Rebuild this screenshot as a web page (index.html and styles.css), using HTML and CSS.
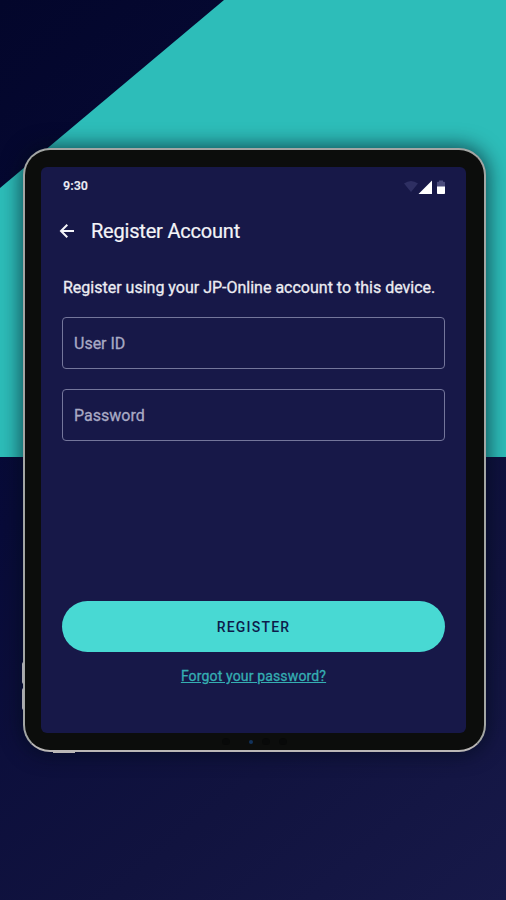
FILE: index.html
```
<!DOCTYPE html>
<html lang="en">
<head>
    <meta charset="UTF-8">
    <meta name="viewport" content="width=device-width, initial-scale=1.0">
    <title>Register Account</title>
    <link rel="stylesheet" href="styles.css">
</head>
<body>
    <div class="backdrop"></div>

    <div class="device">
        <span class="side-button volume-up"></span>
        <span class="side-button volume-down"></span>
        <span class="antenna"></span>

        <div class="screen">
            <div class="status-bar">
                <span class="time">9:30</span>
                <svg class="status-icons" width="42" height="16" viewBox="0 0 42 16">
                    <path d="M0 3.5 Q7 -1.5 14 3.5 L7 12 Z" fill="#2e2f62"/>
                    <path d="M28 0.5 V14 H14.5 Z" fill="#fff"/>
                    <path d="M33 7 V2.5 Q33 1.8 33.7 1.8 H35 V0.5 H39 V1.8 H40.3 Q41 1.8 41 2.5 V7 Z" fill="#4b4c7c"/>
                    <path d="M33 6.5 H41 V13.2 Q41 14 40.2 14 H33.8 Q33 14 33 13.2 Z" fill="#fff"/>
                </svg>
            </div>

            <div class="app-bar">
                <svg class="back" width="16" height="16" viewBox="0 0 16 16">
                    <path d="M15 8 H2 M8.3 1.7 L2 8 L8.3 14.3" fill="none" stroke="#f4f4f8" stroke-width="2"/>
                </svg>
                <h1>Register Account</h1>
            </div>

            <form class="register-form">
                <p class="intro">Register using your JP-Online account to this device.</p>
                <input type="text" placeholder="User ID">
                <input type="password" placeholder="Password">
                <button type="button" class="btn">REGISTER</button>
                <a href="#" class="forgot">Forgot your password?</a>
            </form>
        </div>

        <div class="sensors">
            <span></span>
            <span class="lens"></span>
            <span></span>
            <span></span>
        </div>
    </div>
</body>
</html>
```
FILE: styles.css
```
* {
    box-sizing: border-box;
}
body {
    margin: 0;
    height: 900px;
    padding: 148px 20px 0 23px;
    overflow: hidden;
    font-family: Roboto, sans-serif;
    background: linear-gradient(140deg, #03062b 0%, #080b39 40%, #11133f 75%, #171949 100%);
}
/* teal area behind the device */
.backdrop {
    position: absolute;
    top: 0;
    left: 0;
    width: 100%;
    height: 457px;
    background: #2dbdb9;
    clip-path: polygon(224px 0, 100% 0, 100% 100%, 0 100%, 0 188px);
}
.device {
    position: relative;
    height: 604px;
    border: 2px solid #a3a6a4;
    border-bottom-color: #bab7b6;
    border-radius: 27px;
    padding: 17px 18px 0 16px;
    background: #0c0d0c;
    box-shadow: 0 0 20px 2px rgba(0, 10, 25, 0.65);
}
.screen {
    height: 566px;
    border-radius: 6px;
    padding: 0 21px;
    background: #171848;
}
.status-bar {
    display: flex;
    justify-content: space-between;
    height: 36px;
    padding-top: 12px;
}
.time {
    margin-left: 1px;
    font-size: 12.5px;
    font-weight: 700;
    line-height: 14px;
    color: #e8e8f0;
}
.status-icons {
    margin: 1px -1px 0 0;
}
.app-bar {
    display: flex;
    align-items: center;
    gap: 16px;
    height: 56px;
    margin-left: -3px;
}
h1 {
    margin: 0;
    font-size: 20px;
    font-weight: 400;
    letter-spacing: -0.2px;
    color: #f4f4f8;
    -webkit-text-stroke: 0.2px;
}
.register-form {
    display: flex;
    flex-direction: column;
    align-items: center;
}
.intro {
    align-self: flex-start;
    margin: 19px 0 19px 1px;
    font-size: 16px;
    line-height: 20px;
    white-space: nowrap;
    color: #ececf2;
    -webkit-text-stroke: 0.3px;
}
input {
    width: 383px;
    height: 52px;
    margin-bottom: 20px;
    padding: 0 11px;
    border: 1px solid #74769b;
    border-radius: 4px;
    background: transparent;
    font-family: inherit;
    font-size: 16px;
}
input::placeholder {
    color: #a9aac4;
    opacity: 1;
    -webkit-text-stroke: 0.3px;
}
.btn {
    width: 383px;
    height: 51px;
    margin-top: 140px;
    border: none;
    border-radius: 26px;
    background: #48d9d3;
    font-family: inherit;
    font-size: 14px;
    font-weight: 500;
    letter-spacing: 1.2px;
    color: #0d1c4b;
}
.forgot {
    margin-top: 15px;
    font-size: 14px;
    line-height: 18px;
    letter-spacing: 0.15px;
    color: #35aeb2;
    text-decoration: underline;
    -webkit-text-stroke: 0.3px;
}
/* camera dots in the bottom bezel */
.sensors {
    display: flex;
    justify-content: center;
    align-items: center;
    gap: 9px;
    height: 17px;
    margin-left: 2px;
}
.sensors span {
    width: 8px;
    height: 7px;
    border-radius: 50%;
    background: #080909;
}
.sensors .lens {
    width: 4px;
    height: 4px;
    margin: 0 0 0 10px;
    background: #12325c;
}
.side-button {
    position: absolute;
    left: -3px;
    width: 2px;
    height: 22px;
    border-radius: 2px 0 0 2px;
    background: #aaaaae;
}
.volume-up {
    top: 512px;
}
.volume-down {
    top: 538px;
}
.antenna {
    position: absolute;
    left: 28px;
    bottom: -3px;
    width: 22px;
    height: 3px;
    background: #bab7b6;
}
```
